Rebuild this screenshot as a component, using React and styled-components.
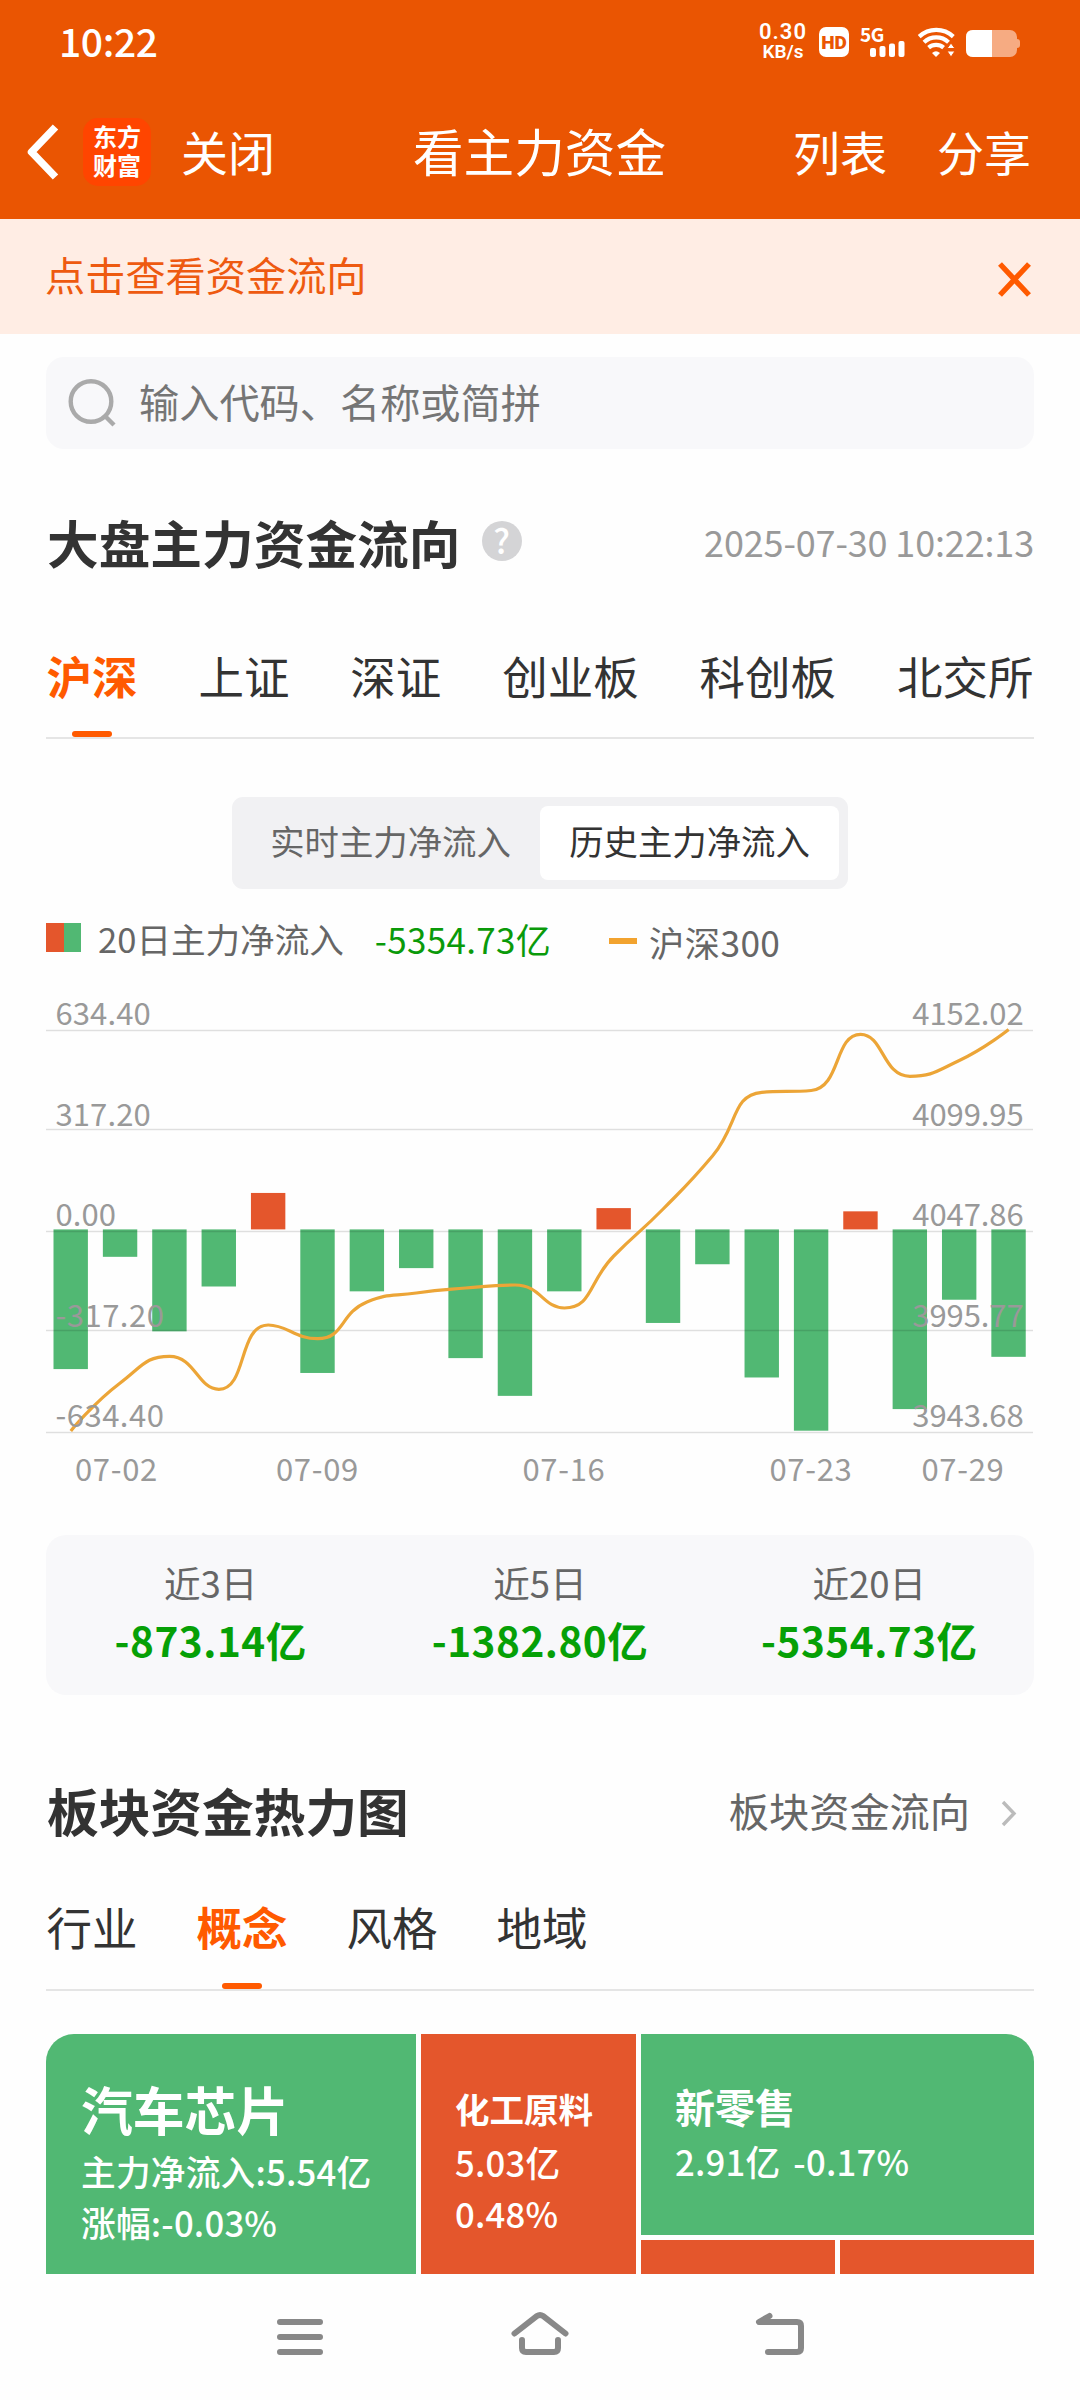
import React, { useState } from "react";
import styled, { createGlobalStyle } from "styled-components";

const GREEN = "#51b873";
const RED = "#e4562c";
const ORANGE = "#ff5a00";

const GlobalStyle = createGlobalStyle`
  * {
    box-sizing: border-box;
  }
  body {
    margin: 0;
    background: #fefefe;
    font-family: "Noto Sans CJK SC", "Noto Sans", sans-serif;
  }
`;

const Screen = styled.div`
  width: 1080px;
  height: 2400px;
  display: flex;
  flex-direction: column;
  overflow: hidden;
  background: #fefefe;
  color: #333;
  white-space: nowrap;
`;

// 頂部狀態列
const StatusBar = styled.div`
  height: 84px;
  padding: 0 60px 0 59px;
  display: flex;
  justify-content: space-between;
  align-items: center;
  background: #ea5502;
  color: #fff;
`;

const Clock = styled.div`
  font-size: 39px;
  font-weight: 500;
  letter-spacing: -0.4px;
  line-height: 76px;
  height: 80px;
`;

const StatusIcons = styled.div`
  display: flex;
  align-items: center;
`;

const Speed = styled.div`
  width: 50px;
  margin-right: 11px;
  font-family: "Roboto", sans-serif;
  font-size: 22px;
  font-weight: 600;
  letter-spacing: 1px;
  line-height: 20px;
  text-align: center;
`;

const SpeedUnit = styled.div`
  font-size: 19px;
  letter-spacing: 0;
`;

const HdBadge = styled.div`
  width: 30px;
  height: 30px;
  margin-right: 11px;
  border-radius: 7px;
  background: #fff;
  color: #ea5502;
  font-family: "Roboto", sans-serif;
  font-size: 19px;
  font-weight: 900;
  line-height: 31px;
  text-align: center;
`;

const Signal = styled.div`
  width: 46px;
  height: 30px;
  margin-right: 12px;
  display: flex;
  flex-direction: column;
`;

const SignalLabel = styled.div`
  height: 14px;
  font-size: 19px;
  font-weight: 700;
  letter-spacing: -0.5px;
  line-height: 14px;
`;

const SignalBars = styled.svg`
  width: 35px;
  height: 16px;
  margin-left: 10px;
`;

const Icon = styled.svg`
  display: block;
  flex: none;
  width: ${({ $w }) => $w}px;
  height: ${({ $h }) => $h}px;
  overflow: visible;
`;

// 標題列
const NavBar = styled.div`
  height: 135px;
  padding: 0 49px 0 27px;
  display: grid;
  grid-template-columns: 1fr auto 1fr;
  align-items: center;
  background: #ea5502;
  color: #fff;
`;

const NavSide = styled.div`
  display: flex;
  align-items: center;
  justify-content: ${({ $right }) => ($right ? "flex-end" : "flex-start")};
  gap: ${({ $right }) => ($right ? "50px" : "0")};
`;

const NavTitle = styled.div`
  margin-right: -22px;
  padding: 0 1px 3px 0;
  font-size: 50.6px;
`;

const NavText = styled.div`
  padding-bottom: 3px;
  font-size: 47px;
`;

const Logo = styled.div`
  width: 68px;
  height: 68px;
  margin: 0 30px 0 24px;
  padding-top: 3px;
  border-radius: 15px;
  background: #ff4500;
  font-size: 24px;
  font-weight: 700;
  line-height: 29px;
  text-align: center;
`;

const Notice = styled.div`
  height: 115px;
  padding: 0 49px 0 45px;
  display: flex;
  align-items: center;
  justify-content: space-between;
  background: #ffede4;
  color: #ee5a10;
  font-size: 40.2px;
`;

const NoticeText = styled.div`
  padding-bottom: 7px;
`;

const Content = styled.div`
  height: 1940px;
  padding: 23px 46px 0;
  overflow: hidden;
`;

const SearchBox = styled.div`
  height: 92px;
  padding-left: 22px;
  display: flex;
  align-items: center;
  gap: 23px;
  border-radius: 18px;
  background: #f8f8fa;
  color: #757575;
  font-size: 40.2px;
`;

const SearchText = styled.div`
  padding-bottom: 6px;
`;

const SectionHead = styled.div`
  height: 80px;
  margin-top: ${({ $top }) => $top}px;
  display: flex;
  align-items: center;
`;

const SectionTitle = styled.div`
  padding-left: 1px;
  font-size: 51.7px;
  font-weight: 700;
`;

const HelpMark = styled.div`
  width: 40px;
  height: 40px;
  margin-left: 21px;
  border-radius: 50%;
  background: #d4d4d6;
  color: #fff;
  font-size: 34px;
  font-weight: 500;
  line-height: 38px;
  text-align: center;
`;

const Time = styled.div`
  margin-left: auto;
  color: #999;
  font-size: 36px;
  letter-spacing: -0.15px;
`;

const MoreLink = styled.div`
  margin-left: auto;
  padding-right: 18px;
  display: flex;
  align-items: center;
  gap: 31px;
  color: #666;
  font-size: 40.2px;
`;

const Tabs = styled.div`
  margin-top: ${({ $top }) => $top}px;
  display: flex;
  justify-content: ${({ $spread }) => ($spread ? "space-between" : "flex-start")};
  gap: ${({ $spread }) => ($spread ? "0" : "58px")};
  border-bottom: 2px solid #e5e5e5;
`;

const Tab = styled.div`
  position: relative;
  height: ${({ $h }) => $h}px;
  padding: 0 0.5px;
  line-height: ${({ $h }) => $h}px;
  font-size: 45.5px;
  font-weight: ${({ $active }) => ($active ? 700 : 400)};
  color: ${({ $active }) => ($active ? ORANGE : "#333")};
  cursor: pointer;

  &::after {
    content: "";
    display: ${({ $active }) => ($active ? "block" : "none")};
    position: absolute;
    left: 50%;
    bottom: 0;
    width: 40px;
    height: 6px;
    margin-left: -20px;
    border-radius: 3px;
    background: ${ORANGE};
  }
`;

const Segment = styled.div`
  width: 616px;
  height: 92px;
  margin: 58px auto 0;
  padding: 9px;
  display: flex;
  border-radius: 11px;
  background: #f1f1f3;
`;

const SegmentItem = styled.div`
  flex: 1;
  line-height: 69px;
  border-radius: 8px;
  background: ${({ $active }) => ($active ? "#fff" : "transparent")};
  color: ${({ $active }) => ($active ? "#333" : "#666")};
  font-size: 34.4px;
  text-align: center;
  cursor: pointer;
`;

const Legend = styled.div`
  height: 60px;
  margin-top: 19px;
  display: flex;
  align-items: center;
  color: #666;
  font-size: 34.6px;
`;

const Swatch = styled.div`
  width: 35px;
  height: 29px;
  margin: 0 17px 2px 0;
  background: linear-gradient(90deg, ${RED} 50%, ${GREEN} 50%);
`;

const LegendValue = styled.div`
  margin-left: 31px;
  color: #0a9a0a;
  font-size: 35px;
  letter-spacing: 0.3px;
`;

const LegendIndex = styled.div`
  margin-left: 58px;
  padding-top: 6px;
  display: flex;
  align-items: center;
  gap: 12px;
  font-size: 35.3px;
  letter-spacing: 0.4px;
`;

const Dash = styled.div`
  width: 28px;
  height: 6px;
  background: #f2a32f;
`;

const ChartSvg = styled.svg`
  display: block;
  width: 988px;
  height: 532px;
  overflow: visible;
`;

const AxisText = styled.text`
  fill: #999;
  font-size: 31px;
  letter-spacing: ${({ $gap }) => $gap || 0}px;
`;

const Summary = styled.div`
  height: 160px;
  margin-top: 35px;
  padding-top: 22px;
  display: grid;
  grid-template-columns: repeat(3, 1fr);
  border-radius: 20px;
  background: #f8f8fa;
  text-align: center;
`;

const SummaryLabel = styled.div`
  color: #666;
  font-size: 36.6px;
  line-height: 52px;
`;

const SummaryValue = styled.div`
  margin-top: 1px;
  color: #06a006;
  font-size: 40.5px;
  font-weight: 700;
  letter-spacing: 0.5px;
  line-height: 60px;
`;

// 熱力圖
const HeatMap = styled.div`
  height: 240px;
  margin-top: 43px;
  display: grid;
  grid-template-columns: 370px 215px 194px 194px;
  grid-template-rows: 201px 34px;
  gap: 5px;
  border-radius: 28px 28px 0 0;
  overflow: hidden;
  color: #fff;
`;

const Block = styled.div`
  grid-column: span ${({ $cols }) => $cols || 1};
  grid-row: span ${({ $rows }) => $rows || 1};
  padding: ${({ $pad }) => $pad || "0"};
  background: ${({ $up }) => ($up ? RED : GREEN)};
`;

const BlockName = styled.div`
  margin-bottom: ${({ $gap }) => $gap || 0}px;
  font-size: ${({ $size }) => $size}px;
  font-weight: 700;
  line-height: 60px;
`;

const BlockText = styled.div`
  font-size: 34.7px;
  font-weight: 500;
  letter-spacing: 0.2px;
  line-height: 51px;
  word-spacing: 5px;
`;

const SystemNav = styled.div`
  height: 126px;
  display: flex;
  align-items: center;
  justify-content: center;
  gap: 180px;
`;

const flows = [
  -433, -85, -316, -177, 113, -445, -192, -120, -399, -516,
  -192, 66, -290, -108, -459, -624, 56, -557, -218, -395,
];

const indexY = [
  463, 415, 388.3, 421.3, 357, 370.7, 334, 325, 320, 317,
  340, 288, 241, 188, 124.3, 122.5, 66.3, 108.3, 92.5, 61.5,
];

const gridY = [62.5, 161.5, 263.5, 362.5, 464.5];
const leftLabels = ["634.40", "317.20", "0.00", "-317.20", "-634.40"];
const rightLabels = ["4152.02", "4099.95", "4047.86", "3995.77", "3943.68"];
const labelY = [57, 158, 258, 359, 459];
const dates = [
  ["07-02", 70.5],
  ["07-09", 271.5],
  ["07-16", 518],
  ["07-23", 765],
  ["07-29", 917],
];

const ZERO = 261.4;
const STEP = 49.36;

const clamp = (v, a, b) => Math.max(Math.min(a, b), Math.min(Math.max(a, b), v));

// smooth curve, control points stay inside each segment's box
function smoothPath(pts) {
  const cps = pts.map((p, i) => {
    const prev = pts[i - 1];
    const next = pts[i + 1];
    if (!prev || !next) return [p, p];
    const lp = Math.hypot(p[0] - prev[0], p[1] - prev[1]);
    const ln = Math.hypot(next[0] - p[0], next[1] - p[1]);
    const v = [next[0] - prev[0], next[1] - prev[1]];
    const k = (0.5 * ln) / (ln + lp);
    let out = [0, 1].map((a) => clamp(p[a] + v[a] * k, p[a], next[a]));
    let into = [0, 1].map((a) => clamp(p[a] - ((out[a] - p[a]) * lp) / ln, p[a], prev[a]));
    out = [0, 1].map((a) => p[a] + ((p[a] - into[a]) * ln) / lp);
    return [into, out];
  });
  return pts.reduce((d, p, i) => {
    if (i === 0) return `M${p}`;
    return `${d} C${cps[i - 1][1]} ${cps[i][0]} ${p}`;
  }, "");
}

function Chart() {
  const points = indexY.map((y, i) => [24.8 + STEP * i, y]);
  return (
    <ChartSvg viewBox="0 0 988 532">
      {flows.map((v, i) => {
        const h = Math.abs(v) * 0.3226;
        return (
          <rect
            key={i}
            x={7.5 + STEP * i}
            y={v > 0 ? ZERO - h : ZERO}
            width="34.4"
            height={h}
            fill={v > 0 ? RED : GREEN}
          />
        );
      })}
      {gridY.map((y) => (
        <line key={y} x1="0" x2="987" y1={y} y2={y} stroke="rgba(0,0,0,0.12)" strokeWidth="1.4" />
      ))}
      <path d={smoothPath(points)} fill="none" stroke="#eca537" strokeWidth="3.2" />
      {labelY.map((y, i) => (
        <g key={y}>
          <AxisText x="9.5" y={y} $gap={i > 2 ? 0.5 : 0.1}>{leftLabels[i]}</AxisText>
          <AxisText x="977.5" y={y} $gap={-0.1} textAnchor="end">{rightLabels[i]}</AxisText>
        </g>
      ))}
      {dates.map(([text, x]) => (
        <AxisText key={text} x={x} y="513" $gap={0.7} textAnchor="middle">{text}</AxisText>
      ))}
    </ChartSvg>
  );
}

function TabList({ items, active, onChange, height, top, spread }) {
  return (
    <Tabs $top={top} $spread={spread}>
      {items.map((item) => (
        <Tab key={item} $h={height} $active={item === active} onClick={() => onChange(item)}>
          {item}
        </Tab>
      ))}
    </Tabs>
  );
}

function Status() {
  return (
    <StatusBar>
      <Clock>10:22</Clock>
      <StatusIcons>
        <Speed>
          0.30
          <SpeedUnit>KB/s</SpeedUnit>
        </Speed>
        <HdBadge>HD</HdBadge>
        <Signal>
          <SignalLabel>5G</SignalLabel>
          <SignalBars viewBox="0 0 35 16" fill="#fff">
            <rect x="0" y="7" width="6" height="9" rx="2" />
            <rect x="9.5" y="5" width="6" height="11" rx="2" />
            <rect x="19" y="2.5" width="6" height="13.5" rx="2" />
            <rect x="28.5" y="0" width="6" height="16" rx="2" />
          </SignalBars>
        </Signal>
        <Icon $w={37} $h={29} viewBox="0 0 37 29">
          <g fill="none" stroke="#fff" strokeWidth="4.2">
            <path d="M1.2 8.6 A25 25 0 0 1 35.3 8.6" />
            <path d="M6 14.2 A18 18 0 0 1 30.5 14.2" />
            <path d="M10.6 19.7 A11.5 11.5 0 0 1 25.6 19.7" />
          </g>
          <path d="M14 25 Q18 21.6 22 25 L18 29 Z" fill="#fff" />
          <path d="M33 15 L37 20.5 H29 Z M29 23 H37 L33 29 Z" fill="#fff" stroke="#ea5502" strokeWidth="1" />
        </Icon>
        <Icon $w={65} $h={27} viewBox="-11 -1 65 27">
          <rect x="0" y="0" width="51" height="27" rx="7" fill="#f6ab82" />
          <path d="M51 9 Q54 9 54 12 V15 Q54 18 51 18 Z" fill="#f6ab82" />
          <path d="M7 0 H26 V27 H7 Q0 27 0 20 V7 Q0 0 7 0 Z" fill="#fff" />
        </Icon>
      </StatusIcons>
    </StatusBar>
  );
}

function App() {
  const [market, setMarket] = useState("沪深");
  const [board, setBoard] = useState("概念");
  const [mode, setMode] = useState("历史主力净流入");

  return (
    <Screen>
      <GlobalStyle />
      <Status />
      <NavBar>
        <NavSide>
          <Icon $w={32} $h={56} viewBox="0 0 32 56">
            <path d="M28.5 3 L4.5 28 L28.5 53" fill="none" stroke="#fff" strokeWidth="7.5" strokeLinejoin="round" />
          </Icon>
          <Logo>东方<br />财富</Logo>
          <NavText>关闭</NavText>
        </NavSide>
        <NavTitle>看主力资金</NavTitle>
        <NavSide $right>
          <NavText>列表</NavText>
          <NavText>分享</NavText>
        </NavSide>
      </NavBar>
      <Notice>
        <NoticeText>点击查看资金流向</NoticeText>
        <Icon $w={33} $h={26} viewBox="0 -3 33 26">
          <path d="M2 -3 L31 28 M31 -3 L2 28" stroke={ORANGE} strokeWidth="5.4" />
        </Icon>
      </Notice>

      <Content>
        <SearchBox>
          <Icon $w={48} $h={48} viewBox="0 0 48 48">
            <circle cx="23" cy="22.5" r="20.3" fill="none" stroke="#aaa" strokeWidth="4.4" />
            <path d="M37 37 L46 46" stroke="#aaa" strokeWidth="4.4" />
          </Icon>
          <SearchText>输入代码、名称或简拼</SearchText>
        </SearchBox>

        <SectionHead $top={52}>
          <SectionTitle>大盘主力资金流向</SectionTitle>
          <HelpMark>?</HelpMark>
          <Time>2025-07-30 10:22:13</Time>
        </SectionHead>
        <TabList
          items={["沪深", "上证", "深证", "创业板", "科创板", "北交所"]}
          active={market}
          onChange={setMarket}
          height={123}
          top={33}
          spread
        />

        <Segment>
          {["实时主力净流入", "历史主力净流入"].map((name) => (
            <SegmentItem key={name} $active={name === mode} onClick={() => setMode(name)}>
              {name}
            </SegmentItem>
          ))}
        </Segment>
        <Legend>
          <Swatch />
          20日主力净流入
          <LegendValue>-5354.73亿</LegendValue>
          <LegendIndex>
            <Dash />
            沪深300
          </LegendIndex>
        </Legend>
        <Chart />

        <Summary>
          {[
            ["近3日", "-873.14亿"],
            ["近5日", "-1382.80亿"],
            ["近20日", "-5354.73亿"],
          ].map(([label, value]) => (
            <div key={label}>
              <SummaryLabel>{label}</SummaryLabel>
              <SummaryValue>{value}</SummaryValue>
            </div>
          ))}
        </Summary>

        <SectionHead $top={74}>
          <SectionTitle>板块资金热力图</SectionTitle>
          <MoreLink>
            板块资金流向
            <Icon $w={15} $h={20} viewBox="0 -4 15 20">
              <path d="M2 -1 L13 10.5 L2 22" fill="none" stroke="#bbb" strokeWidth="3.4" />
            </Icon>
          </MoreLink>
        </SectionHead>
        <TabList
          items={["行业", "概念", "风格", "地域"]}
          active={board}
          onChange={setBoard}
          height={126}
          top={14}
        />

        <HeatMap>
          <Block $rows={2} $pad="45px 0 0 35px">
            <BlockName $size={51.8} $gap={7}>汽车芯片</BlockName>
            <BlockText>主力净流入:5.54亿</BlockText>
            <BlockText>涨幅:-0.03%</BlockText>
          </Block>
          <Block $up $rows={2} $pad="44px 0 0 34px">
            <BlockName $size={34.5} $gap={-1}>化工原料</BlockName>
            <BlockText>5.03亿</BlockText>
            <BlockText>0.48%</BlockText>
          </Block>
          <Block $cols={2} $pad="42px 0 0 34px">
            <BlockName $size={40}>新零售</BlockName>
            <BlockText>2.91亿 -0.17%</BlockText>
          </Block>
          <Block $up />
          <Block $up />
        </HeatMap>
      </Content>

      <SystemNav>
        <Icon $w={60} $h={48} viewBox="0 0 60 48">
          <path d="M10 9 H50 M10 24 H50 M10 39 H50" stroke="#888" strokeWidth="6" strokeLinecap="round" />
        </Icon>
        <Icon $w={60} $h={48} viewBox="0 0 60 48">
          <g fill="none" stroke="#888" strokeWidth="6" strokeLinecap="round">
            <path d="M4.5 20.5 L27 3 Q30 1 33 3 L55.5 20.5" />
            <path d="M12 27 V35 Q12 39 16 39 H44 Q48 39 48 35 V27" />
          </g>
        </Icon>
        <Icon $w={60} $h={48} viewBox="0 0 60 48">
          <path
            d="M19.5 3 L9 9 H47 Q51 9 51 13 V35 Q51 39 47 39 H18"
            fill="none"
            stroke="#888"
            strokeWidth="6"
            strokeLinecap="round"
            strokeLinejoin="round"
          />
        </Icon>
      </SystemNav>
    </Screen>
  );
}

export default App;
